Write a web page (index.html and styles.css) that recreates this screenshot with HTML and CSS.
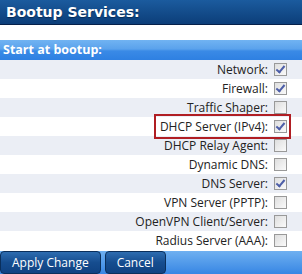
FILE: index.html
```html
<!DOCTYPE html>
<html lang="en">
<head>
    <meta charset="UTF-8">
    <title>Bootup Services</title>
    <link rel="stylesheet" href="styles.css">
</head>
<body>
    <div class="panel">
        <h1 class="title">Bootup Services:</h1>

        <div class="section">
            <h2 class="section-head">Start at bootup:</h2>

            <div class="row alt"><span class="label">Network:</span><span class="box checked"></span></div>
            <div class="row"><span class="label">Firewall:</span><span class="box checked"></span></div>
            <div class="row alt"><span class="label">Traffic Shaper:</span><span class="box"></span></div>
            <div class="row"><span class="mark"><span class="label">DHCP Server (IPv4):</span><span class="box checked"></span></span></div>
            <div class="row alt"><span class="label">DHCP Relay Agent:</span><span class="box"></span></div>
            <div class="row"><span class="label">Dynamic DNS:</span><span class="box"></span></div>
            <div class="row alt"><span class="label">DNS Server:</span><span class="box checked"></span></div>
            <div class="row"><span class="label">VPN Server (PPTP):</span><span class="box"></span></div>
            <div class="row alt"><span class="label">OpenVPN Client/Server:</span><span class="box"></span></div>
            <div class="row"><span class="label">Radius Server (AAA):</span><span class="box"></span></div>
        </div>

        <div class="actions">
            <button class="btn">Apply Change</button>
            <button class="btn">Cancel</button>
        </div>
    </div>
</body>
</html>
```

FILE: styles.css
```css
body {
    margin: 0;
    padding: 0;
    background: #fff;
    font-family: 'Open Sans', sans-serif;
}

.panel {
    width: 302px;
}

.title {
    margin: 0;
    height: 24px;
    padding-left: 6px;
    background: linear-gradient(#1b5b9e, #0c3e79);
    border-bottom: 1px solid #05204a;
    color: #fff;
    font-family: 'DejaVu Sans', sans-serif;
    font-size: 14px;
    font-weight: bold;
    line-height: 24px;
    text-shadow: 0 1px 1px #062a55;
}

.section {
    margin-top: 15px;
}

.section-head {
    margin: 0;
    height: 20px;
    padding-left: 3px;
    background: linear-gradient(#71b3f2 0%, #5aa2ec 45%, #3a8ae6 55%, #2e80e2 100%);
    color: #fff;
    font-family: 'Open Sans', sans-serif;
    font-size: 12.5px;
    font-weight: bold;
    line-height: 20px;
}

.row {
    height: 19px;
    display: flex;
    justify-content: flex-end;
    align-items: center;
    padding-right: 15px;
    background: #fff;
    font-size: 12px;
    color: #222;
}

.row.alt {
    background: #ebeef5;
}

.label {
    margin-right: 6px;
}

.box {
    width: 11px;
    height: 11px;
    border: 1px solid #999;
    background: linear-gradient(135deg, #dedede, #fafafa);
    box-sizing: content-box;
    position: relative;
}

.box.checked::after {
    content: '';
    position: absolute;
    left: 3px;
    top: 0px;
    width: 3px;
    height: 7px;
    border: solid #4d5ea8;
    border-width: 0 2px 2px 0;
    transform: rotate(40deg);
}

.mark {
    display: flex;
    align-items: center;
    outline: 2px solid #b01e23;
    outline-offset: 2px;
    padding-left: 2px;
}

.actions {
    display: flex;
    gap: 4px;
    height: 23px;
    margin-top: 1px;
    background: linear-gradient(#6fb0f0, #3786e4);
}

.btn {
    height: 23px;
    padding: 0 11px;
    border: 1px solid #0a2f5c;
    border-radius: 4px;
    background: linear-gradient(#2d6cb0, #164d8f 50%, #0f4282);
    color: #fff;
    font-family: 'Open Sans', sans-serif;
    font-size: 12px;
}
```
